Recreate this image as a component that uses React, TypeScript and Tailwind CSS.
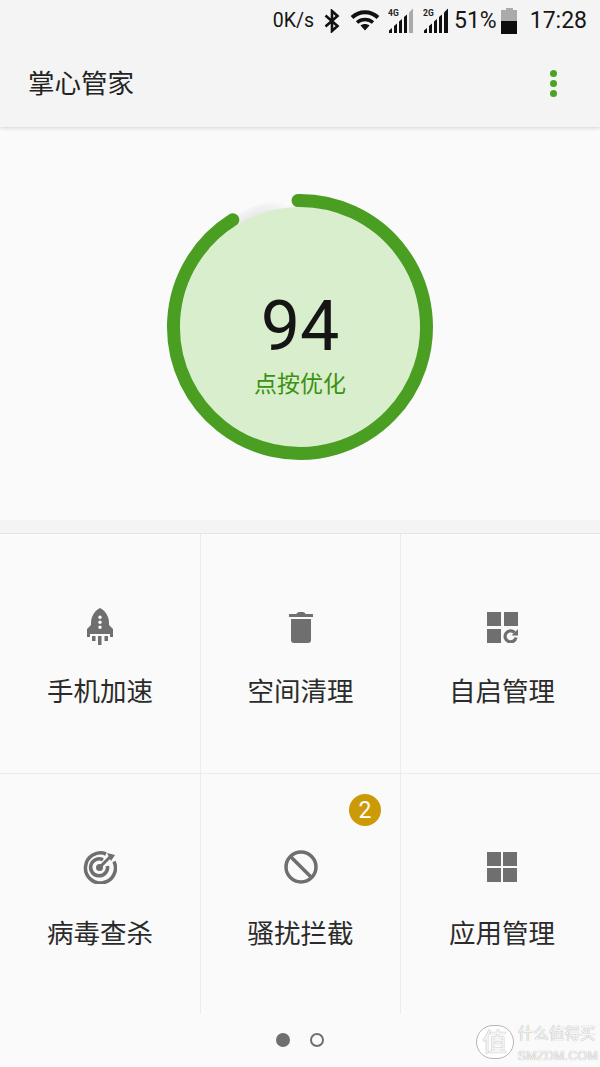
const cjk = "font-['Roboto','Noto_Sans_CJK_SC',sans-serif]";

function Signal({ label, dim }: { label: string; dim?: boolean }) {
  return (
    <svg width="26" height="25" viewBox="0 0 26 25" className="shrink-0">
      <text x="0" y="7.500" fontSize="8.500" fontWeight="700" fontFamily="Roboto, sans-serif" fill="#222">
        {label}
      </text>
      <path d="M1 25V22.500L4 20V25Z" fill="#111" />
      <path d="M6 25V18L9 15.500V25Z" fill="#111" />
      <path d="M11 25V13.500L14 11V25Z" fill="#111" />
      <path d="M16 25V9L19 6.500V25Z" fill="#111" />
      <path d="M21 25V4.500L25 0.500V25Z" fill={dim ? "#aaa" : "#111"} />
    </svg>
  );
}

function StatusBar() {
  return (
    <div className={`h-[40px] flex items-center justify-end pt-[1px] text-[#161616] ${cjk}`}>
      <span className="text-[19.500px] leading-none">0K/s</span>
      <svg width="16" height="24" viewBox="0 0 16 24" className="ml-[10px]" fill="none" stroke="#111" strokeWidth="2.600">
        <path d="M1.500 6.500 13.500 17 8 22V2L13.500 7 1.500 17.500" />
      </svg>
      <svg width="30" height="21" viewBox="0 0 30 21" className="ml-[10px]" fill="none" stroke="#111">
        <path d="M2 7.500C9.500 .5 20.500 .5 28 7.500" strokeWidth="4" />
        <path d="M7 12.500C11.500 8.500 18.500 8.500 23 12.500" strokeWidth="3.500" />
        <path d="M15 20.500 10.500 15.500C13 13.500 17 13.500 19.500 15.500Z" fill="#111" stroke="none" />
      </svg>
      <div className="ml-[8px] flex">
        <Signal label="4G" dim />
      </div>
      <div className="ml-[9px] flex">
        <Signal label="2G" />
      </div>
      <span className="ml-[5px] text-[23px] leading-none">51%</span>
      <div className="ml-[4px] w-[17px] h-[26px] flex flex-col items-center">
        <div className="w-[7px] h-[2px] bg-[#aaa]" />
        <div className="w-[16px] h-[11px] bg-[#aaa]" />
        <div className="w-[16px] h-[13px] bg-[#0c0c0c]" />
      </div>
      <span className="ml-[12px] mr-[13px] text-[23px] leading-none">17:28</span>
    </div>
  );
}

function AppBar() {
  return (
    <div className="h-[87px] flex items-center justify-between pl-[28px] pr-[43px]">
      <span className={`mt-[2px] text-[26.500px] leading-none text-[#222] ${cjk}`}>掌心管家</span>
      <div className="flex flex-col gap-[3px]">
        <div className="w-[7px] h-[7px] rounded-full bg-[#4ba224]" />
        <div className="w-[7px] h-[7px] rounded-full bg-[#4ba224]" />
        <div className="w-[7px] h-[7px] rounded-full bg-[#4ba224]" />
      </div>
    </div>
  );
}

function ScoreRing() {
  return (
    <div className="relative w-[268px] h-[268px]">
      <svg width="268" height="268" viewBox="0 0 268 268">
        <defs>
          <radialGradient id="gapShade" cx="0.5" cy="1" r="1">
            <stop offset="0.86" stopColor="#000" stopOpacity="0.14" />
            <stop offset="1" stopColor="#000" stopOpacity="0" />
          </radialGradient>
        </defs>
        <path d="M134 134 L66 24 A128 128 0 0 1 132 6Z" fill="url(#gapShade)" opacity="0.6" />
        <circle cx="134" cy="134" r="120" fill="#d9eecd" />
        <path
          d="M132 7.500A126.500 126.500 0 1 1 66.800 26.800"
          fill="none"
          stroke="#4a9f22"
          strokeWidth="13"
          strokeLinecap="round"
        />
      </svg>
      <div className="absolute inset-0 flex flex-col items-center">
        <span className="mt-[91px] text-[70px] leading-[84px] text-[#151515] font-['Roboto',sans-serif]">94</span>
        <span className={`mt-[1px] text-[23px] leading-[32px] text-[#3b9210] ${cjk}`}>点按优化</span>
      </div>
    </div>
  );
}

function RocketIcon() {
  return (
    <svg width="28" height="38" viewBox="0 0 28 38" fill="#6f6f6f">
      <path
        fillRule="evenodd"
        d="M14 0C20 3 23 9 23 15V17L27 21V29H24V26H4V29H1V21L5 17V15C5 9 8 3 14 0ZM14 7.500A1.700 1.700 0 1 0 14 11 1.700 1.700 0 1 0 14 7.500ZM14 12.500A1.700 1.700 0 1 0 14 16 1.700 1.700 0 1 0 14 12.500ZM14 17.500A1.700 1.700 0 1 0 14 21 1.700 1.700 0 1 0 14 17.500Z"
      />
      <rect x="6" y="28" width="3.500" height="5" />
      <rect x="12" y="28" width="3.500" height="9" />
      <rect x="18.500" y="28" width="3.500" height="5" />
    </svg>
  );
}

function TrashIcon() {
  return (
    <svg width="24" height="31" viewBox="0 0 24 31" fill="#6f6f6f">
      <path d="M0 2H7.500C8 .5 9 0 12 0 15 0 16 .5 16.500 2H24V5H0Z" />
      <path d="M2 7H22V28C22 30 21 31 19 31H5C3 31 2 30 2 28Z" />
    </svg>
  );
}

function AutostartIcon() {
  return (
    <svg width="31" height="31" viewBox="0 0 31 31" fill="#6f6f6f">
      <rect x="0" y="0" width="14" height="14" />
      <rect x="17" y="0" width="14" height="14" />
      <rect x="0" y="17" width="14" height="14" />
      <path d="M27.500 20.500A5.500 5.500 0 1 0 29 25.500" fill="none" stroke="#6f6f6f" strokeWidth="3.200" />
      <path d="M24.500 23.500H31V17Z" />
    </svg>
  );
}

function TargetIcon() {
  return (
    <svg width="34" height="34" viewBox="0 0 34 34" fill="none" stroke="#6f6f6f">
      <path d="M23 4A15 15 0 1 0 31 11.500" strokeWidth="3.500" />
      <path d="M20 9.800A8.500 8.500 0 1 0 24.500 16" strokeWidth="3.500" />
      <circle cx="16.500" cy="17.500" r="3.500" fill="#6f6f6f" stroke="none" />
      <path d="M16.500 17.500 27 7" strokeWidth="3" />
      <path d="M24 3 32 5 28 11Z" fill="#6f6f6f" stroke="none" />
    </svg>
  );
}

function BanIcon() {
  return (
    <svg width="34" height="34" viewBox="0 0 34 34" fill="none" stroke="#6f6f6f" strokeWidth="3.500">
      <circle cx="17" cy="17" r="15" />
      <path d="M6.500 6.500 27.500 27.500" />
    </svg>
  );
}

function AppsIcon() {
  return (
    <svg width="30" height="30" viewBox="0 0 30 30" fill="#6f6f6f">
      <rect x="0" y="0" width="14" height="14" />
      <rect x="16" y="0" width="14" height="14" />
      <rect x="0" y="16" width="14" height="14" />
      <rect x="16" y="16" width="14" height="14" />
    </svg>
  );
}

const tools = [
  { label: "手机加速", icon: <RocketIcon /> },
  { label: "空间清理", icon: <TrashIcon /> },
  { label: "自启管理", icon: <AutostartIcon /> },
  { label: "病毒查杀", icon: <TargetIcon /> },
  { label: "骚扰拦截", icon: <BanIcon />, badge: 2 },
  { label: "应用管理", icon: <AppsIcon /> },
];

function ToolCell({ tool, index }: { tool: (typeof tools)[number]; index: number }) {
  return (
    <div
      className={`relative h-[240px] flex flex-col items-center pt-[72px] ${index % 3 < 2 ? "border-r border-[#ececec]" : "pl-[3px]"} ${index < 3 ? "border-b border-[#ececec]" : ""}`}
    >
      <div className="h-[42px] flex items-center justify-center">{tool.icon}</div>
      <span className={`${index < 3 ? "mt-[27px]" : "mt-[29px]"} text-[26.500px] leading-[34px] text-[#2b2b2b] ${cjk}`}>{tool.label}</span>
      {tool.badge && (
        <div className="absolute left-[148px] top-[20px] w-[32px] h-[32px] rounded-full bg-[#cc9a06] flex items-center justify-center text-white text-[23px] leading-none font-['Roboto',sans-serif]">
          {tool.badge}
        </div>
      )}
    </div>
  );
}

function Watermark() {
  return (
    <div className="absolute right-[2px] bottom-[3px] flex items-start gap-[4px] text-[#f6f6f6] [text-shadow:0_0_1px_#8a8a8a]">
      <div className={`mt-[1px] w-[38px] h-[34px] rounded-full border border-[#b5b5b5] bg-white flex items-center justify-center text-[25px] leading-none ${cjk}`}>
        值
      </div>
      <div className="flex flex-col">
        <span className={`text-[15.600px] leading-[20px] ${cjk}`}>什么值得买</span>
        <span className="mt-[4px] text-[12.500px] leading-[16px] tracking-[0.2px] font-['Liberation_Sans',sans-serif]">SMZDM.COM</span>
      </div>
    </div>
  );
}

export default function App() {
  return (
    <div className="relative w-[600px] h-[1067px] overflow-hidden bg-[#fafafa]">
      <header className="relative z-10 bg-[#f4f4f4] shadow-[0_1px_4px_rgba(0,0,0,0.16)]">
        <StatusBar />
        <AppBar />
      </header>
      <div className="h-[393px] flex items-center justify-center pt-[7px]">
        <ScoreRing />
      </div>
      <div className="h-[14px] bg-[#f4f4f4] border-b border-[#e6e6e6]" />
      <div className="grid grid-cols-[201px_200px_199px]">
        {tools.map((tool, i) => (
          <ToolCell key={tool.label} tool={tool} index={i} />
        ))}
      </div>
      <div className="flex items-center justify-center gap-[20px] pt-[19px]">
        <div className="w-[14px] h-[14px] rounded-full bg-[#6f6f6f]" />
        <div className="w-[14px] h-[14px] rounded-full border-2 border-[#6f6f6f]" />
      </div>
      <Watermark />
    </div>
  );
}
